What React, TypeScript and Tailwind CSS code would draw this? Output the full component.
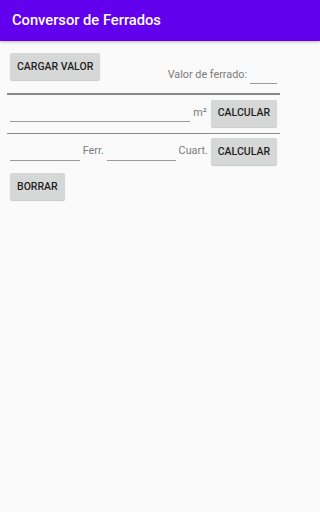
export default function App() {
  const btn =
    "h-[27px] shrink-0 rounded-[2px] bg-[#d6d7d7] px-[7px] text-[10.5px] font-medium text-[#1f1f1f] shadow-[0_1px_1px_rgba(0,0,0,0.2)]"
  const label = "text-[10.8px] text-[#7a7a7a]"
  const underline = "border-b border-[#9a9a9a]"

  return (
    <div className="min-h-screen w-full bg-[#fafafa] font-['Roboto',sans-serif]">
      <header className="flex h-[41px] items-center bg-[#6200ee] px-[12px] shadow-[0_1px_3px_rgba(0,0,0,0.25)]">
        <h1 className="text-[14.7px] font-medium text-white">Conversor de Ferrados</h1>
      </header>

      <div className="w-[287px] px-[7px]">
        {/* cargar valor */}
        <div className="mt-[12px] flex h-[27px] items-start justify-between px-[3px]">
          <button className={btn}>CARGAR VALOR</button>
          <div className="mt-[15px] flex items-start gap-[3px]">
            <span className={`${label} leading-[13px]`}>Valor de ferrado:</span>
            <span className={`${underline} h-[16px] w-[27px]`} />
          </div>
        </div>

        <div className="mt-[13px] h-[1.5px] bg-[#8a8a8a]" />

        {/* m2 row */}
        <div className="mt-[5px] flex h-[27px] items-center px-[3px]">
          <span className={`${underline} mb-[5px] w-[182px] self-end`} />
          <span className={`${label} ml-[3px] mr-[4px]`}>m²</span>
          <button className={btn}>CALCULAR</button>
        </div>

        <div className="mt-[6px] h-[1.5px] bg-[#8a8a8a]" />

        {/* ferrados row */}
        <div className="mt-[4px] flex h-[27px] items-center px-[3px]">
          <span className={`${underline} mb-[4px] w-[70px] self-end`} />
          <span className={`${label} ml-[3px] mr-[3px]`}>Ferr.</span>
          <span className={`${underline} mb-[4px] w-[69px] self-end`} />
          <span className={`${label} ml-[3px] mr-[3px]`}>Cuart.</span>
          <button className={btn}>CALCULAR</button>
        </div>

        <div className="mt-[8px] px-[3px]">
          <button className={btn}>BORRAR</button>
        </div>
      </div>
    </div>
  )
}
